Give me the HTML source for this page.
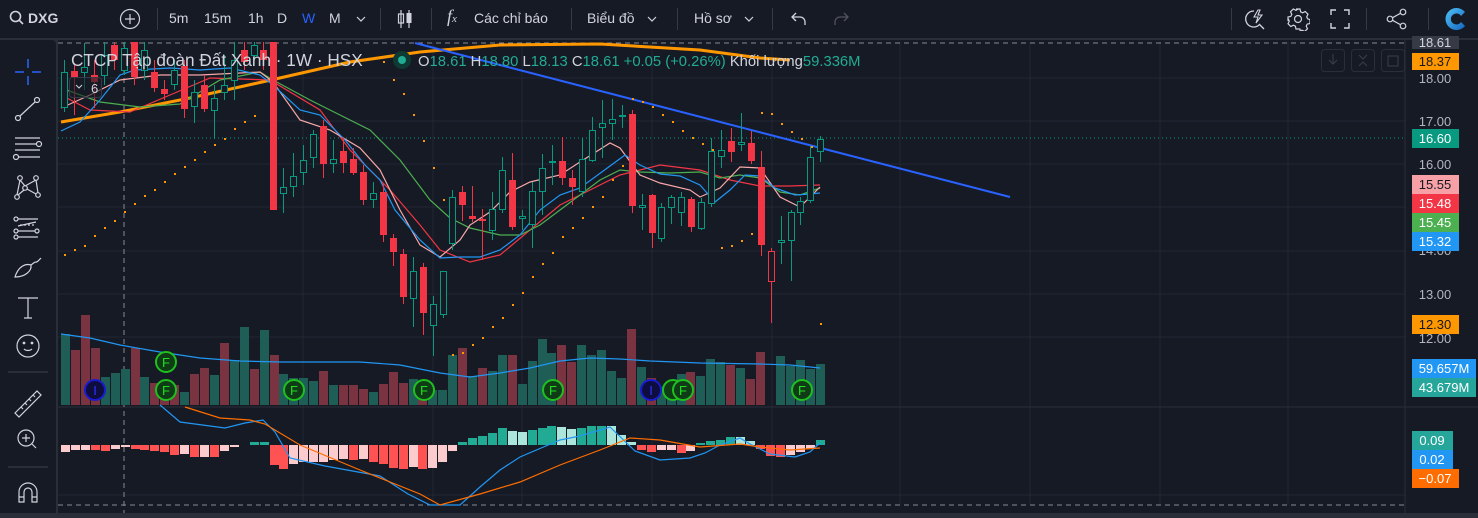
<!DOCTYPE html>
<html><head><meta charset="utf-8"><style>
*{margin:0;padding:0;box-sizing:border-box}
body{width:1478px;height:513px;background:#2a2e39;overflow:hidden;font-family:"Liberation Sans","Noto Sans CJK SC",sans-serif;color:#d1d4dc;position:relative}
#top{position:absolute;left:0;top:0;width:1478px;height:38px;background:#161a25}
#left{position:absolute;left:0;top:40px;width:56px;height:473px;background:#161a25;border-radius:0 4px 0 0}
#chart{position:absolute;left:58px;top:40px;width:1420px;height:473px;background:#161a25}
.t{position:absolute;top:10px;font-size:14px;color:#d1d4dc;white-space:nowrap}
.sep{position:absolute;top:8px;width:1px;height:22px;background:#363a45}
</style></head><body>
<div id="top">
<svg style="position:absolute;left:9px;top:10px" width="16" height="16" viewBox="0 0 16 16"><circle cx="6.5" cy="6.5" r="5" fill="none" stroke="#d1d4dc" stroke-width="1.6"/><path d="M10 10l4 4" stroke="#d1d4dc" stroke-width="1.6"/></svg>
<div class="t" style="left:28px;font-weight:bold">DXG</div>
<svg style="position:absolute;left:119px;top:8px" width="22" height="22"><circle cx="11" cy="11" r="9.5" fill="none" stroke="#d1d4dc" stroke-width="1.2"/><path d="M11 6v10M6 11h10" stroke="#d1d4dc" stroke-width="1.2"/></svg>
<div class="sep" style="left:157px"></div>
<div class="t" style="left:169px">5m</div>
<div class="t" style="left:204px">15m</div>
<div class="t" style="left:248px">1h</div>
<div class="t" style="left:277px">D</div>
<div class="t" style="left:302px;color:#2962ff">W</div>
<div class="t" style="left:329px">M</div>
<svg style="position:absolute;left:355px;top:14px" width="12" height="10"><path d="M2 3l4 4 4-4" fill="none" stroke="#d1d4dc" stroke-width="1.2"/></svg>
<div class="sep" style="left:380px"></div>
<svg style="position:absolute;left:395px;top:8px" width="20" height="22"><path d="M6 2v18M14 2v18" stroke="#d1d4dc" stroke-width="1.2"/><rect x="3.5" y="6" width="5" height="9" fill="none" stroke="#d1d4dc" stroke-width="1.2"/><rect x="11.5" y="5" width="5" height="10" fill="#d1d4dc"/></svg>
<div class="sep" style="left:431px"></div>
<div class="t" style="left:447px;font-family:'Liberation Serif',serif;font-style:italic;font-size:18px;top:6px">f<span style="font-size:11px">x</span></div>
<div class="t" style="left:474px">Các chỉ báo</div>
<div class="sep" style="left:571px"></div>
<div class="t" style="left:587px">Biểu đồ</div>
<svg style="position:absolute;left:646px;top:14px" width="12" height="10"><path d="M2 3l4 4 4-4" fill="none" stroke="#d1d4dc" stroke-width="1.2"/></svg>
<div class="sep" style="left:677px"></div>
<div class="t" style="left:694px">Hồ sơ</div>
<svg style="position:absolute;left:743px;top:14px" width="12" height="10"><path d="M2 3l4 4 4-4" fill="none" stroke="#d1d4dc" stroke-width="1.2"/></svg>
<div class="sep" style="left:772px"></div>
<svg style="position:absolute;left:790px;top:10px" width="18" height="18"><path d="M6 3L2 7l4 4M2 7h8a5 5 0 015 5v3" fill="none" stroke="#d1d4dc" stroke-width="1.3"/></svg>
<svg style="position:absolute;left:832px;top:10px" width="18" height="18"><path d="M12 3l4 4-4 4M16 7H8a5 5 0 00-5 5v3" fill="none" stroke="#50535e" stroke-width="1.3"/></svg>
<div class="sep" style="left:1231px"></div>
<svg style="position:absolute;left:1244px;top:7px" width="24" height="24"><path d="M10 4a8 8 0 105 14" fill="none" stroke="#d1d4dc" stroke-width="1.3"/><path d="M15 17l5 5" stroke="#d1d4dc" stroke-width="1.3"/><path d="M14 3l-4 7h4l-2 6 6-8h-4l2-5z" fill="none" stroke="#d1d4dc" stroke-width="1.1"/></svg>
<svg style="position:absolute;left:1286px;top:7px" width="24" height="24" viewBox="0 0 24 24"><path d="M10 2h4l.6 2.8 2 1 2.6-1.3 2.8 2.8-1.3 2.6 1 2 2.3.6v4l-2.8.6-1 2 1.3 2.6-2.8 2.8-2.6-1.3-2 1L14 22h-4l-.6-2.8-2-1-2.6 1.3-2.8-2.8 1.3-2.6-1-2L2 14v-4l2.8-.6 1-2-1.3-2.6 2.8-2.8 2.6 1.3 2-1z" fill="none" stroke="#d1d4dc" stroke-width="1.2"/><circle cx="12" cy="12" r="3.5" fill="none" stroke="#d1d4dc" stroke-width="1.2"/></svg>
<svg style="position:absolute;left:1330px;top:9px" width="20" height="20"><path d="M1 6V1h5M14 1h5v5M19 14v5h-5M6 19H1v-5" fill="none" stroke="#d1d4dc" stroke-width="1.4"/></svg>
<div class="sep" style="left:1366px"></div>
<svg style="position:absolute;left:1386px;top:8px" width="22" height="22"><circle cx="4" cy="11" r="2.8" fill="none" stroke="#d1d4dc" stroke-width="1.2"/><circle cx="17" cy="4" r="2.8" fill="none" stroke="#d1d4dc" stroke-width="1.2"/><circle cx="17" cy="18" r="2.8" fill="none" stroke="#d1d4dc" stroke-width="1.2"/><path d="M6.5 9.7l8-4.4M6.5 12.3l8 4.4" stroke="#d1d4dc" stroke-width="1.2"/></svg>
<div class="sep" style="left:1428px"></div>
<svg style="position:absolute;left:1443px;top:6px" width="26" height="26" viewBox="0 0 26 26"><defs><linearGradient id="lg" x1="0" y1="0" x2="1" y2="1"><stop offset="0" stop-color="#4fc3f7"/><stop offset="1" stop-color="#1565c0"/></linearGradient></defs><path d="M22 6A11 11 0 1022 20L18 16A5.5 5.5 0 1118 10z" fill="url(#lg)"/></svg>
</div>

<div id="left">
<svg width="56" height="473" fill="none" stroke="#d1d4dc" stroke-width="1.2">
<path d="M28 19v9M28 36v9M15 32h9M32 32h9" stroke="#2962ff" stroke-width="1.5"/>
<circle cx="18" cy="78" r="2.5"/><circle cx="37" cy="60" r="2.5"/><path d="M20 76l15-14"/>
<path d="M15 98h25M15 104h22M15 110h25M18 117h22"/><circle cx="39" cy="104" r="2.5"/><circle cx="16" cy="117" r="2.5"/>
<circle cx="20" cy="138" r="2.3"/><circle cx="36" cy="138" r="2.3"/><circle cx="25" cy="148" r="2.3"/><circle cx="17" cy="157" r="2.3"/><circle cx="38" cy="155" r="2.3"/><path d="M20 140l-3 15M20 140l5 6M36 140l-11 6M36 140l2 13M27 149l9 5M24 150l-6 5"/>
<circle cx="16" cy="179" r="2"/><circle cx="16" cy="191" r="2"/><circle cx="16" cy="197" r="2"/><circle cx="37" cy="191" r="2"/><path d="M18 179h20M18 197h20M18 191h17M18 186l18-4" /><path d="M20 185h15" stroke-dasharray="2 2"/>
<path d="M15 237c3-10 10-14 16-12 1 6-6 12-16 12zM31 225l4-3M35 222c2 1 4-2 6-4"/>
<path d="M18 258h20M28 258v20M24 278h8"/>
<circle cx="28" cy="306" r="11"/><circle cx="24" cy="303" r=".8" fill="#d1d4dc"/><circle cx="32" cy="303" r=".8" fill="#d1d4dc"/><path d="M24 309c2 2 6 2 8 0"/>
<path d="M8 332h40" stroke="#363a45"/>
<path d="M15 373l22-22 4 4-22 22zM21 367l2 2M25 363l2 2M29 359l2 2M33 355l2 2"/>
<circle cx="26" cy="398" r="8"/><path d="M26 394v8M22 398h8M32 404l4 4"/>
<path d="M8 427h40" stroke="#363a45"/>
<path d="M19 462v-10a9 9 0 0118 0v10h-5v-10a4 4 0 00-8 0v10zM19 457h5M32 457h5"/>
</svg>
</div>

<div id="chart"></div>

<svg style="position:absolute;left:0;top:0" width="1478" height="513">
<defs><clipPath id="cp"><rect x="58" y="42" width="1347" height="471"/></clipPath></defs>
<g stroke="#232733" stroke-width="1">
<path d="M58 78H1405M58 121H1405M58 164H1405M58 207H1405M58 251H1405M58 294H1405M58 337H1405M58 495H1405"/>
<path d="M303 42V505M433 42V505M522 42V505M652 42V505M772 42V505M900 42V505M1030 42V505M1160 42V505M1288 42V505"/>
</g>
<path d="M58 407H1478M1405 40V513" stroke="#2a2e39"/>
<path d="M58 43H1405M58 505H1405" stroke="#868993" stroke-dasharray="5 4"/>
<path d="M124 42V513" stroke="#868993" stroke-dasharray="5 4"/>
<path d="M58 138H1405" stroke="#089981" stroke-dasharray="1 3"/>
<g clip-path="url(#cp)">
<g fill="#1f5e57">
<rect x="61" y="334" width="9" height="71"/><rect x="101" y="377" width="9" height="28"/><rect x="111" y="373" width="9" height="32"/><rect x="121" y="369" width="9" height="36"/><rect x="140" y="377" width="9" height="28"/><rect x="180" y="392" width="9" height="13"/><rect x="210" y="375" width="9" height="30"/><rect x="230" y="360" width="9" height="45"/><rect x="240" y="327" width="9" height="78"/><rect x="260" y="330" width="9" height="75"/><rect x="279" y="374" width="9" height="31"/><rect x="289" y="378" width="9" height="27"/><rect x="299" y="378" width="9" height="27"/><rect x="309" y="381" width="9" height="24"/><rect x="329" y="385" width="9" height="20"/><rect x="369" y="392" width="9" height="13"/><rect x="409" y="379" width="9" height="26"/><rect x="428" y="390" width="9" height="15"/><rect x="438" y="390" width="9" height="15"/><rect x="448" y="355" width="9" height="50"/><rect x="468" y="376" width="9" height="29"/><rect x="488" y="371" width="9" height="34"/><rect x="498" y="355" width="9" height="50"/><rect x="518" y="384" width="9" height="21"/><rect x="528" y="361" width="9" height="44"/><rect x="538" y="339" width="9" height="66"/><rect x="547" y="353" width="9" height="52"/><rect x="577" y="345" width="9" height="60"/><rect x="587" y="355" width="9" height="50"/><rect x="597" y="350" width="9" height="55"/><rect x="607" y="371" width="9" height="34"/><rect x="617" y="378" width="9" height="27"/><rect x="637" y="367" width="9" height="38"/><rect x="657" y="387" width="9" height="18"/><rect x="667" y="382" width="9" height="23"/><rect x="677" y="374" width="9" height="31"/><rect x="696" y="376" width="9" height="29"/><rect x="706" y="359" width="9" height="46"/><rect x="716" y="362" width="9" height="43"/><rect x="736" y="368" width="9" height="37"/><rect x="776" y="356" width="9" height="49"/><rect x="786" y="366" width="9" height="39"/><rect x="796" y="360" width="9" height="45"/><rect x="806" y="369" width="9" height="36"/><rect x="816" y="364" width="9" height="41"/>
</g>
<g fill="#7a3340">
<rect x="71" y="350" width="9" height="55"/><rect x="81" y="315" width="9" height="90"/><rect x="91" y="348" width="9" height="57"/><rect x="131" y="348" width="9" height="57"/><rect x="150" y="383" width="9" height="22"/><rect x="160" y="383" width="9" height="22"/><rect x="170" y="385" width="9" height="20"/><rect x="190" y="374" width="9" height="31"/><rect x="200" y="368" width="9" height="37"/><rect x="220" y="343" width="9" height="62"/><rect x="250" y="369" width="9" height="36"/><rect x="270" y="355" width="9" height="50"/><rect x="319" y="371" width="9" height="34"/><rect x="339" y="385" width="9" height="20"/><rect x="349" y="385" width="9" height="20"/><rect x="359" y="389" width="9" height="16"/><rect x="379" y="384" width="9" height="21"/><rect x="389" y="372" width="9" height="33"/><rect x="399" y="383" width="9" height="22"/><rect x="418" y="385" width="9" height="20"/><rect x="458" y="348" width="9" height="57"/><rect x="478" y="368" width="9" height="37"/><rect x="508" y="355" width="9" height="50"/><rect x="557" y="345" width="9" height="60"/><rect x="567" y="362" width="9" height="43"/><rect x="627" y="329" width="9" height="76"/><rect x="647" y="378" width="9" height="27"/><rect x="686" y="372" width="9" height="33"/><rect x="726" y="365" width="9" height="40"/><rect x="746" y="379" width="9" height="26"/><rect x="756" y="352" width="9" height="53"/>
</g>
<polyline fill="none" stroke="#2196f3" stroke-width="1.2" points="61,334 90,338 120,345 160,352 200,358 240,361 280,362 320,362 360,362 400,365 440,373 470,377 500,373 530,368 560,361 590,358 620,359 650,361 700,363 760,364 790,365 820,368"/>
<g fill="#fccbcd"><rect x="61" y="445" width="9" height="7"/><rect x="71" y="445" width="9" height="5"/><rect x="81" y="445" width="9" height="5"/><rect x="111" y="445" width="9" height="4"/><rect x="121" y="445" width="9" height="2"/><rect x="180" y="445" width="9" height="9"/><rect x="200" y="445" width="9" height="12"/><rect x="220" y="445" width="9" height="6"/><rect x="230" y="445" width="9" height="2"/><rect x="289" y="445" width="9" height="19"/><rect x="299" y="445" width="9" height="17"/><rect x="309" y="445" width="9" height="17"/><rect x="319" y="445" width="9" height="17"/><rect x="329" y="445" width="9" height="15"/><rect x="339" y="445" width="9" height="14"/><rect x="359" y="445" width="9" height="14"/><rect x="409" y="445" width="9" height="22"/><rect x="428" y="445" width="9" height="23"/><rect x="438" y="445" width="9" height="17"/><rect x="448" y="445" width="9" height="6"/><rect x="657" y="445" width="9" height="5"/><rect x="667" y="445" width="9" height="5"/><rect x="686" y="445" width="9" height="6"/><rect x="786" y="445" width="9" height="10"/><rect x="796" y="445" width="9" height="7"/><rect x="806" y="445" width="9" height="4"/></g>
<g fill="#ff5252"><rect x="91" y="445" width="9" height="5"/><rect x="101" y="445" width="9" height="6"/><rect x="131" y="445" width="9" height="4"/><rect x="140" y="445" width="9" height="5"/><rect x="150" y="445" width="9" height="6"/><rect x="160" y="445" width="9" height="7"/><rect x="170" y="445" width="9" height="10"/><rect x="190" y="445" width="9" height="12"/><rect x="210" y="445" width="9" height="12"/><rect x="270" y="445" width="9" height="20"/><rect x="279" y="445" width="9" height="24"/><rect x="349" y="445" width="9" height="15"/><rect x="369" y="445" width="9" height="17"/><rect x="379" y="445" width="9" height="19"/><rect x="389" y="445" width="9" height="23"/><rect x="399" y="445" width="9" height="24"/><rect x="418" y="445" width="9" height="24"/><rect x="637" y="445" width="9" height="5"/><rect x="647" y="445" width="9" height="7"/><rect x="677" y="445" width="9" height="8"/><rect x="756" y="445" width="9" height="4"/><rect x="766" y="445" width="9" height="11"/><rect x="776" y="445" width="9" height="12"/></g>
<g fill="#22ab94"><rect x="250" y="442" width="9" height="3"/><rect x="260" y="442" width="9" height="3"/><rect x="458" y="442" width="9" height="3"/><rect x="468" y="438" width="9" height="7"/><rect x="478" y="436" width="9" height="9"/><rect x="488" y="433" width="9" height="12"/><rect x="498" y="428" width="9" height="17"/><rect x="528" y="430" width="9" height="15"/><rect x="538" y="428" width="9" height="17"/><rect x="547" y="426" width="9" height="19"/><rect x="577" y="428" width="9" height="17"/><rect x="587" y="426" width="9" height="19"/><rect x="597" y="426" width="9" height="19"/><rect x="696" y="443" width="9" height="2"/><rect x="706" y="441" width="9" height="4"/><rect x="716" y="440" width="9" height="5"/><rect x="726" y="437" width="9" height="8"/><rect x="816" y="440" width="9" height="5"/></g>
<g fill="#ace5dc"><rect x="508" y="431" width="9" height="14"/><rect x="518" y="432" width="9" height="13"/><rect x="557" y="427" width="9" height="18"/><rect x="567" y="429" width="9" height="16"/><rect x="607" y="426" width="9" height="19"/><rect x="617" y="435" width="9" height="10"/><rect x="627" y="442" width="9" height="3"/><rect x="736" y="437" width="9" height="8"/><rect x="746" y="441" width="9" height="4"/></g>
<polyline fill="none" stroke="#2196f3" stroke-width="1.2" points="160,405 180,422 225,428 245,423 263,420 275,432 290,458 325,466 380,476 408,494 430,505 460,505 480,487 500,470 520,457 560,440 580,436 610,427 635,451 660,460 690,458 705,453 720,445 740,438 750,444 770,454 795,457 810,452 820,443"/>
<polyline fill="none" stroke="#ff6d00" stroke-width="1.2" points="185,407 220,418 250,420 265,424 300,445 360,470 420,494 440,505 480,494 520,482 560,465 600,450 630,438 660,440 700,447 740,444 760,447 790,450 820,448"/>
<polyline fill="none" stroke="#ff9800" stroke-width="3" points="61,122 120,112 190,98 271,80 350,62 420,52 500,45 600,44 700,50 760,58 790,60"/>
<polyline fill="none" stroke="#f23645" stroke-width="1.2" points="61,95 90,110 130,112 170,95 210,78 270,80 320,110 350,150 390,190 420,225 440,250 470,262 500,255 530,230 560,205 590,190 620,175 660,165 700,170 730,180 760,186 790,186 820,185"/>
<polyline fill="none" stroke="#4caf50" stroke-width="1.2" points="61,88 100,102 140,107 180,104 220,80 260,72 273,80 310,100 340,115 370,130 400,160 430,200 450,218 470,228 500,235 520,235 540,225 560,210 580,195 600,180 620,170 640,172 670,173 700,172 720,178 740,175 760,178 780,192 800,195 820,188"/>
<polyline fill="none" stroke="#f7a8a8" stroke-width="1.2" points="61,108 90,95 120,80 160,75 200,75 260,72 273,82 300,120 330,130 360,148 380,170 400,210 420,245 440,257 460,240 470,225 490,212 510,192 530,182 560,175 580,162 610,143 620,148 640,175 660,183 690,190 700,197 720,188 740,167 760,168 780,197 800,207 820,187"/>
<polyline fill="none" stroke="#2196f3" stroke-width="1.2" points="61,131 80,122 100,100 120,75 135,70 170,68 200,70 230,68 260,75 273,85 300,110 320,115 345,140 365,165 380,180 395,210 420,240 440,258 460,257 480,257 500,250 520,235 540,210 560,195 580,188 610,166 625,155 640,165 660,174 680,176 700,185 715,202 730,190 745,175 760,176 775,188 795,195 810,194 820,193"/>
<path d="M415 43L1010 197" stroke="#2962ff" stroke-width="2"/>
<path d="M64 255h2M74 250h2M84 246h2M94 236h2M104 228h2M114 221h2M124 212h2M134 204h2M144 196h2M154 190h2M164 182h2M174 174h2M184 167h2M194 160h2M204 152h2M214 145h2M224 139h2M234 129h2M244 122h2M254 116h2M383 62h2M393 80h2M403 94h2M413 115h2M423 141h2M433 168h2M443 200h2M452 355h2M462 353h2M472 345h2M482 338h2M492 327h2M502 318h2M512 305h2M522 293h2M532 277h2M542 264h2M552 253h2M562 237h2M572 228h2M582 218h2M592 207h2M602 197h2M612 180h2M622 166h2M632 99h2M642 102h2M652 107h2M662 115h2M672 122h2M682 131h2M692 138h2M702 144h2M712 150h2M721 248h2M731 246h2M741 241h2M751 234h2M761 113h2M771 114h2M781 124h2M791 132h2M801 139h2M811 147h2M820 324h2" stroke="#ff9800" stroke-width="2"/>
<path stroke="#089981" stroke-width="1" d="M64.5 60V112M84.5 43V90M104.5 42V85M124.5 42V75M144.5 42V80M174.5 60V90M194.5 80V123M214.5 85V139M224.5 55V100M234.5 42V100M254.5 42V60M283.5 168V213M293.5 153V197M303.5 145V185M313.5 130V168M333.5 140V173M373.5 182V208M413.5 257V327M433.5 296V356M443.5 271V318M452.5 190V250M492.5 192V240M502.5 157V213M522.5 210V230M532.5 182V248M542.5 154V215M552.5 145V185M582.5 138V197M592.5 117V162M602.5 100V158M612.5 99V140M622.5 105V128M642.5 194V230M661.5 203V242M671.5 195V224M681.5 192V226M701.5 198V230M711.5 138V207M721.5 130V168M741.5 113V151M781.5 216V264M791.5 210V281M800.5 197V225M810.5 146V203M820.5 136V162"/>
<path stroke="#f23645" stroke-width="1" d="M74.5 63V115M94.5 60V108M114.5 42V70M134.5 42V85M154.5 60V92M164.5 80V100M184.5 60V118M204.5 75V112M244.5 42V70M263.5 42V70M273.5 42V210M323.5 120V178M343.5 137V173M353.5 148V175M363.5 165V205M383.5 183V242M393.5 234V266M403.5 249V304M423.5 263V335M462.5 186V221M472.5 186V222M482.5 209V260M512.5 153V230M562.5 137V185M572.5 170V205M632.5 110V213M652.5 194V248M691.5 197V232M731.5 128V162M751.5 131V164M761.5 151V256M771.5 248V323"/>
<g fill="#161a25" stroke="#089981" stroke-width="1">
<rect x="61.5" y="72.5" width="6" height="35"/><rect x="81.5" y="67.5" width="6" height="5"/><rect x="101.5" y="55.5" width="6" height="20"/><rect x="121.5" y="48.5" width="6" height="22"/><rect x="141.5" y="50.5" width="6" height="20"/><rect x="171.5" y="70.5" width="6" height="14"/><rect x="191.5" y="92.5" width="6" height="14"/><rect x="211.5" y="98.5" width="6" height="12"/><rect x="221.5" y="85.5" width="6" height="7"/><rect x="231.5" y="60.5" width="6" height="20"/><rect x="251.5" y="45.5" width="6" height="10"/>
<rect x="280.5" y="187.5" width="6" height="6"/><rect x="290.5" y="176.5" width="6" height="10"/><rect x="300.5" y="160.5" width="6" height="12"/><rect x="310.5" y="134.5" width="6" height="23"/><rect x="330.5" y="159.5" width="6" height="4"/><rect x="370.5" y="193.5" width="6" height="6"/><rect x="410.5" y="271.5" width="6" height="27"/><rect x="430.5" y="304.5" width="6" height="21"/><rect x="440.5" y="271.5" width="6" height="43"/><rect x="449.5" y="197.5" width="6" height="46"/><rect x="489.5" y="209.5" width="6" height="21"/><rect x="499.5" y="170.5" width="6" height="39"/><rect x="519.5" y="216.5" width="6" height="2"/><rect x="529.5" y="191.5" width="6" height="33"/><rect x="539.5" y="168.5" width="6" height="23"/><rect x="549.5" y="161.5" width="6" height="1"/><rect x="579.5" y="159.5" width="6" height="32"/><rect x="589.5" y="130.5" width="6" height="30"/><rect x="599.5" y="123.5" width="6" height="4"/><rect x="609.5" y="119.5" width="6" height="4"/><rect x="619.5" y="115.5" width="6" height="1"/><rect x="639.5" y="205.5" width="6" height="2"/><rect x="658.5" y="207.5" width="6" height="31"/><rect x="668.5" y="197.5" width="6" height="10"/><rect x="678.5" y="197.5" width="6" height="15"/><rect x="698.5" y="202.5" width="6" height="26"/><rect x="708.5" y="151.5" width="6" height="52"/><rect x="718.5" y="150.5" width="6" height="6"/><rect x="738.5" y="142.5" width="6" height="2"/><rect x="778.5" y="240.5" width="6" height="2"/><rect x="788.5" y="212.5" width="6" height="28"/><rect x="797.5" y="201.5" width="6" height="11"/><rect x="807.5" y="157.5" width="6" height="43"/><rect x="817.5" y="139.5" width="6" height="12"/>
</g>
<g fill="#f23645">
<rect x="71" y="71" width="7" height="6"/><rect x="91" y="75" width="7" height="7"/><rect x="111" y="45" width="7" height="15"/><rect x="131" y="42" width="7" height="35"/><rect x="151" y="72" width="7" height="16"/><rect x="161" y="89" width="7" height="5"/><rect x="181" y="66" width="7" height="43"/><rect x="201" y="85" width="7" height="24"/><rect x="241" y="50" width="7" height="12"/><rect x="260" y="50" width="7" height="10"/><rect x="270" y="42" width="7" height="168"/><rect x="320" y="126" width="7" height="38"/><rect x="340" y="151" width="7" height="12"/><rect x="350" y="159" width="7" height="14"/><rect x="360" y="172" width="7" height="28"/><rect x="380" y="192" width="7" height="43"/><rect x="390" y="238" width="7" height="14"/><rect x="400" y="254" width="7" height="43"/><rect x="420" y="267" width="7" height="46"/><rect x="459" y="192" width="7" height="13"/><rect x="469" y="216" width="7" height="3"/><rect x="479" y="219" width="7" height="2"/><rect x="509" y="180" width="7" height="47"/><rect x="559" y="161" width="7" height="17"/><rect x="569" y="178" width="7" height="9"/><rect x="629" y="114" width="7" height="92"/><rect x="649" y="195" width="7" height="38"/><rect x="688" y="199" width="7" height="28"/><rect x="728" y="141" width="7" height="11"/><rect x="748" y="143" width="7" height="18"/><rect x="758" y="167" width="7" height="78"/>
</g>
<rect x="768.5" y="251.5" width="6" height="30" fill="#161a25" stroke="#f23645"/>
<g stroke-width="2" fill="#0f3b16" font-family="Liberation Sans,sans-serif" font-size="13" text-anchor="middle">
<circle cx="166" cy="362" r="10" stroke="#1fbf1f"/><circle cx="166" cy="390" r="10" stroke="#1fbf1f"/><circle cx="294" cy="390" r="10" stroke="#1fbf1f"/><circle cx="424" cy="390" r="10" stroke="#1fbf1f"/><circle cx="553" cy="390" r="10" stroke="#1fbf1f"/><circle cx="673" cy="390" r="10" stroke="#1fbf1f"/><circle cx="683" cy="390" r="10" stroke="#1fbf1f"/><circle cx="802" cy="390" r="10" stroke="#1fbf1f"/>
<circle cx="95" cy="390" r="10" stroke="#1a1ad0" fill="#0d0d40"/><circle cx="651" cy="390" r="10" stroke="#1a1ad0" fill="#0d0d40"/>
<g fill="#1fdf1f" stroke="none"><text x="166" y="367">F</text><text x="166" y="395">F</text><text x="294" y="395">F</text><text x="424" y="395">F</text><text x="553" y="395">F</text><text x="683" y="395">F</text><text x="802" y="395">F</text></g>
<g fill="#3030ff" stroke="none"><text x="95" y="395">I</text><text x="651" y="395">I</text></g>
</g>
</g>
<text x="71" y="66" font-family="Liberation Sans,sans-serif" font-size="17.2" fill="#d1d4dc">CTCP Tập đoàn Đất Xanh · 1W · HSX</text>
<circle cx="402" cy="60" r="9" fill="#0d3b34"/><circle cx="402" cy="60" r="4" fill="#22ab94"/>
<text x="418" y="66" font-family="Liberation Sans,sans-serif" font-size="14.8" fill="#22ab94"><tspan fill="#d1d4dc">O</tspan>18.61 <tspan fill="#d1d4dc">H</tspan>18.80 <tspan fill="#d1d4dc">L</tspan>18.13 <tspan fill="#d1d4dc">C</tspan>18.61 +0.05 (+0.26%) <tspan fill="#d1d4dc">Khối lượng</tspan>59.336M</text>
<rect x="69.5" y="77.5" width="32" height="20" rx="3" fill="rgba(22,26,37,.6)" stroke="#363a45"/>
<path d="M76 85l3 3 3-3" fill="none" stroke="#d1d4dc"/>
<text x="91" y="93" font-family="Liberation Sans,sans-serif" font-size="13" fill="#d1d4dc">6</text>
<g fill="none" stroke="#2a2e39"><rect x="1321.5" y="49.5" width="23" height="22" rx="3"/><rect x="1351.5" y="49.5" width="23" height="22" rx="3"/><rect x="1381.5" y="49.5" width="23" height="22" rx="3"/></g>
<path d="M1333 54v10M1329 60l4 4 4-4M1359 55l4 4 4-4M1359 66l4-4 4 4M1388 56h10v10h-10z" fill="none" stroke="#3a3e49"/>
<g font-family="Liberation Sans,sans-serif" font-size="13" text-anchor="middle">
<rect x="1412" y="36" width="47" height="13" fill="#363a45"/><text x="1435" y="47" fill="#d1d4dc">18.61</text>
<rect x="1412" y="53" width="47" height="17" fill="#ff9800"/><text x="1435" y="66" fill="#131722">18.37</text>
<text x="1435" y="83" fill="#b2b5be">18.00</text>
<text x="1435" y="126" fill="#b2b5be">17.00</text>
<rect x="1412" y="129" width="47" height="19" fill="#089981"/><text x="1435" y="143" fill="#fff">16.60</text>
<text x="1435" y="169" fill="#b2b5be">16.00</text>
<text x="1435" y="255" fill="#b2b5be">14.00</text>
<rect x="1412" y="175" width="47" height="19" fill="#f7a1a6"/><text x="1435" y="189" fill="#131722">15.55</text>
<rect x="1412" y="194" width="47" height="19" fill="#f23645"/><text x="1435" y="208" fill="#fff">15.48</text>
<rect x="1412" y="213" width="47" height="19" fill="#4caf50"/><text x="1435" y="227" fill="#fff">15.45</text>
<rect x="1412" y="232" width="47" height="19" fill="#2196f3"/><text x="1435" y="246" fill="#fff">15.32</text>
<text x="1435" y="299" fill="#b2b5be">13.00</text>
<rect x="1412" y="315" width="47" height="19" fill="#ff9800"/><text x="1435" y="329" fill="#131722">12.30</text>
<text x="1435" y="343" fill="#b2b5be">12.00</text>
<rect x="1412" y="359" width="64" height="19" fill="#2196f3"/><text x="1444" y="373" fill="#fff">59.657M</text>
<rect x="1412" y="378" width="64" height="19" fill="#26a69a"/><text x="1444" y="392" fill="#fff">43.679M</text>
<rect x="1412" y="431" width="41" height="19" fill="#26a69a"/><text x="1432" y="445" fill="#fff">0.09</text>
<rect x="1412" y="450" width="41" height="19" fill="#2196f3"/><text x="1432" y="464" fill="#fff">0.02</text>
<rect x="1412" y="469" width="47" height="19" fill="#ff6d00"/><text x="1435" y="483" fill="#fff">−0.07</text>
</g>
</svg>
</body></html>
